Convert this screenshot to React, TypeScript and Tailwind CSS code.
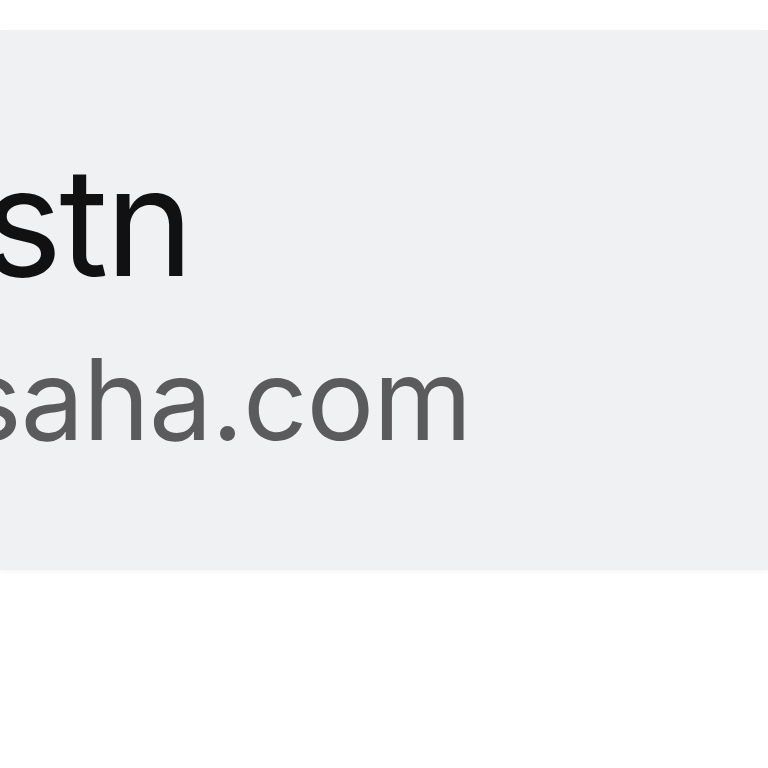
import React from 'react';

export default function App() {
  return (
    <div className="min-h-screen bg-white pt-[30px]" style={{ fontFamily: 'Inter, "Liberation Sans", Arial, sans-serif' }}>
      <div className="h-[540px] overflow-hidden bg-[#f0f1f3] shadow-[0_2px_4px_rgba(0,0,0,0.04)]">
        <div className="flex flex-col whitespace-nowrap pt-[117px]">
          <span className="ml-[-17px] text-[150px] leading-none tracking-[-3px] text-[#111111]">stn</span>
          <span className="ml-[-38px] mt-[46px] text-[113px] leading-none tracking-[-1px] text-[#5b5b5e]">saha.com</span>
        </div>
      </div>
    </div>
  );
}
